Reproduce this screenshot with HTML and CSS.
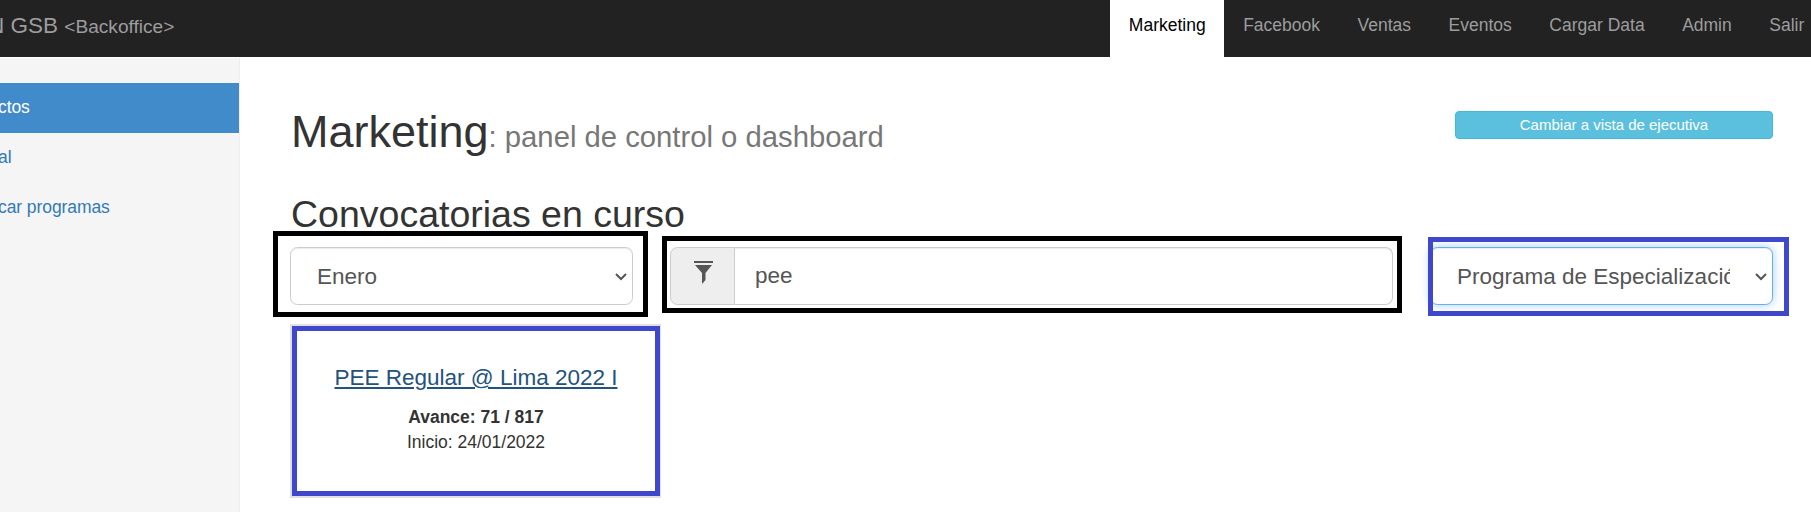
FILE: index.html
```html
<!DOCTYPE html>
<html lang="es">

<head>
  <meta charset="UTF-8" />
  <meta name="viewport" content="width=device-width, initial-scale=1.0" />
  <title>GSB Backoffice - Marketing</title>
  <link rel="stylesheet" href="styles.css">
</head>

<body>
  <header class="navbar">
    <a class="brand">N GSB <small>&lt;Backoffice&gt;</small></a>
    <nav class="nav">
      <a class="active">Marketing</a>
      <a>Facebook</a>
      <a>Ventas</a>
      <a>Eventos</a>
      <a>Cargar Data</a>
      <a>Admin</a>
      <a>Salir</a>
    </nav>
  </header>

  <div class="layout">
    <aside class="sidebar">
      <a class="active">ctos</a>
      <a>al</a>
      <a>car programas</a>
    </aside>

    <main class="main">
      <div class="page_header">
        <h1>Marketing<small>: panel de control o dashboard</small></h1>
        <button class="btn-info">Cambiar a vista de ejecutiva</button>
      </div>

      <h2>Convocatorias en curso</h2>

      <section class="filters">
        <div class="field">
          <select class="control" name="mes">
            <option>Enero</option>
          </select>
          <svg class="chevron" viewBox="0 0 12 8"><path d="M1 1l5 5 5-5" /></svg>
          <span class="mark mark-month"></span>
        </div>
        <div class="field group">
          <span class="addon">
            <svg class="filter_icon" viewBox="0 0 19 23"><path d="M0 0h19v2H0zM1 4h17l-6.500 8v7l-3.500 4V12z" /></svg>
          </span>
          <input class="control" type="text" value="pee">
          <span class="mark mark-search"></span>
        </div>
        <div class="field">
          <select class="control focused" name="programa">
            <option>Programa de Especialización</option>
          </select>
          <svg class="chevron" viewBox="0 0 12 8"><path d="M1 1l5 5 5-5" /></svg>
          <span class="mark mark-program"></span>
        </div>
      </section>

      <article class="card">
        <div class="card_body">
          <h3><a>PEE Regular @ Lima 2022 I</a></h3>
          <p><strong>Avance: 71 / 817</strong></p>
          <p>Inicio: 24/01/2022</p>
        </div>
      </article>
    </main>
  </div>
</body>

</html>
```
FILE: styles.css
```css
* {
  box-sizing: border-box;
}

body {
  margin: 0;
  height: 512px;
  overflow: hidden;
  background: #fff;
  color: #333;
  font-family: "Liberation Sans", Arial, sans-serif;
  font-size: 17.5px;
  line-height: 25px;
}

h1,
h2,
h3,
p {
  margin: 0;
  font-weight: 400;
}

.navbar {
  display: flex;
  justify-content: space-between;
  height: 57px;
  background: #222;
  color: #9d9d9d;
}

.brand {
  margin-left: -12px;
  padding-top: 13px;
  font-size: 22.5px;
  white-space: nowrap;
}

.brand small {
  font-size: 19.1px;
}

.nav {
  display: flex;
  margin-right: -12px;
}

.nav a {
  padding: 13px 18.75px 0;
  white-space: nowrap;
}

.nav .active {
  background: #fff;
  color: #000;
}

.layout {
  display: flex;
  height: 454px;
  margin-top: 1px;
}

.sidebar {
  width: 240px;
  flex: none;
  padding-top: 25px;
  background: #f5f5f5;
  border-right: 1px solid #eee;
}

.sidebar a {
  display: block;
  height: 50px;
  padding-top: 12px;
  margin-left: -2px;
  color: #337ab7;
  letter-spacing: -0.08px;
}

.sidebar .active {
  background: #428bca;
  color: #fff;
}

.main {
  flex: 1;
  padding: 48px 38px 0 50px;
}

.page_header {
  display: flex;
  justify-content: space-between;
  height: 85px;
}

h1 {
  padding: 1px 0 0 1px;
  font-size: 45px;
  line-height: 50px;
}

h1 small {
  color: #777;
  font-size: 29.25px;
}

.btn-info {
  width: 318px;
  height: 28px;
  margin-top: 5px;
  padding: 0 0 2px;
  background: #5bc0de;
  border: 1px solid #46b8da;
  border-radius: 4px;
  color: #fff;
  font-family: inherit;
  font-size: 15px;
}

h2 {
  height: 56px;
  padding-left: 1px;
  font-size: 37.5px;
  line-height: 46px;
}

.filters {
  display: grid;
  grid-template-columns: 343px 723px 343px;
  gap: 37px;
}

.field {
  display: flex;
  position: relative;
  height: 58px;
}

.control {
  flex: 1;
  min-width: 0;
  height: 58px;
  margin: 0;
  padding: 0 42px 0 26px;
  appearance: none;
  background: #fff;
  border: 1px solid #ccc;
  border-radius: 7.5px;
  box-shadow: inset 0 1px 1px rgba(0, 0, 0, 0.075);
  color: #555;
  font-family: inherit;
  font-size: 22.5px;
}

.focused {
  border-color: #66afe9;
  box-shadow: inset 0 1px 1px rgba(0, 0, 0, 0.075), 0 0 10px rgba(102, 175, 233, 0.6);
}

.group .control {
  padding: 0 20px 1px;
  border-left: 0;
  border-radius: 0 7.5px 7.5px 0;
}

.addon {
  width: 65px;
  padding: 13px 0 0 23px;
  background: #eee;
  border: 1px solid #ccc;
  border-radius: 7.5px 0 0 7.5px;
}

.filter_icon {
  display: block;
  width: 19px;
  height: 23px;
  fill: #555;
}

.chevron {
  position: absolute;
  top: 26px;
  right: 6px;
  width: 12px;
  height: 8px;
  fill: none;
  stroke: #555;
  stroke-width: 2;
}

/* highlight frames drawn over the filters */
.mark {
  position: absolute;
  border: 5px solid #000;
  pointer-events: none;
}

.mark-month {
  inset: -16px -15px -12px -17px;
}

.mark-search {
  inset: -11px -9px -8px -8px;
}

.mark-program {
  inset: -10px -16px -11px -2px;
  border-color: #3f48cc;
}

.card {
  width: 371px;
  height: 174px;
  margin-top: 19px;
  border: 2px solid #e1e1e4;
  border-right-width: 1px;
}

.card_body {
  height: 170px;
  padding-top: 33px;
  border: 5px solid #3f48cc;
  text-align: center;
}

.card h3 {
  margin-bottom: 14px;
  font-size: 22.5px;
  line-height: 27px;
}

.card h3 a {
  color: #23527c;
  text-decoration: underline;
}
```
